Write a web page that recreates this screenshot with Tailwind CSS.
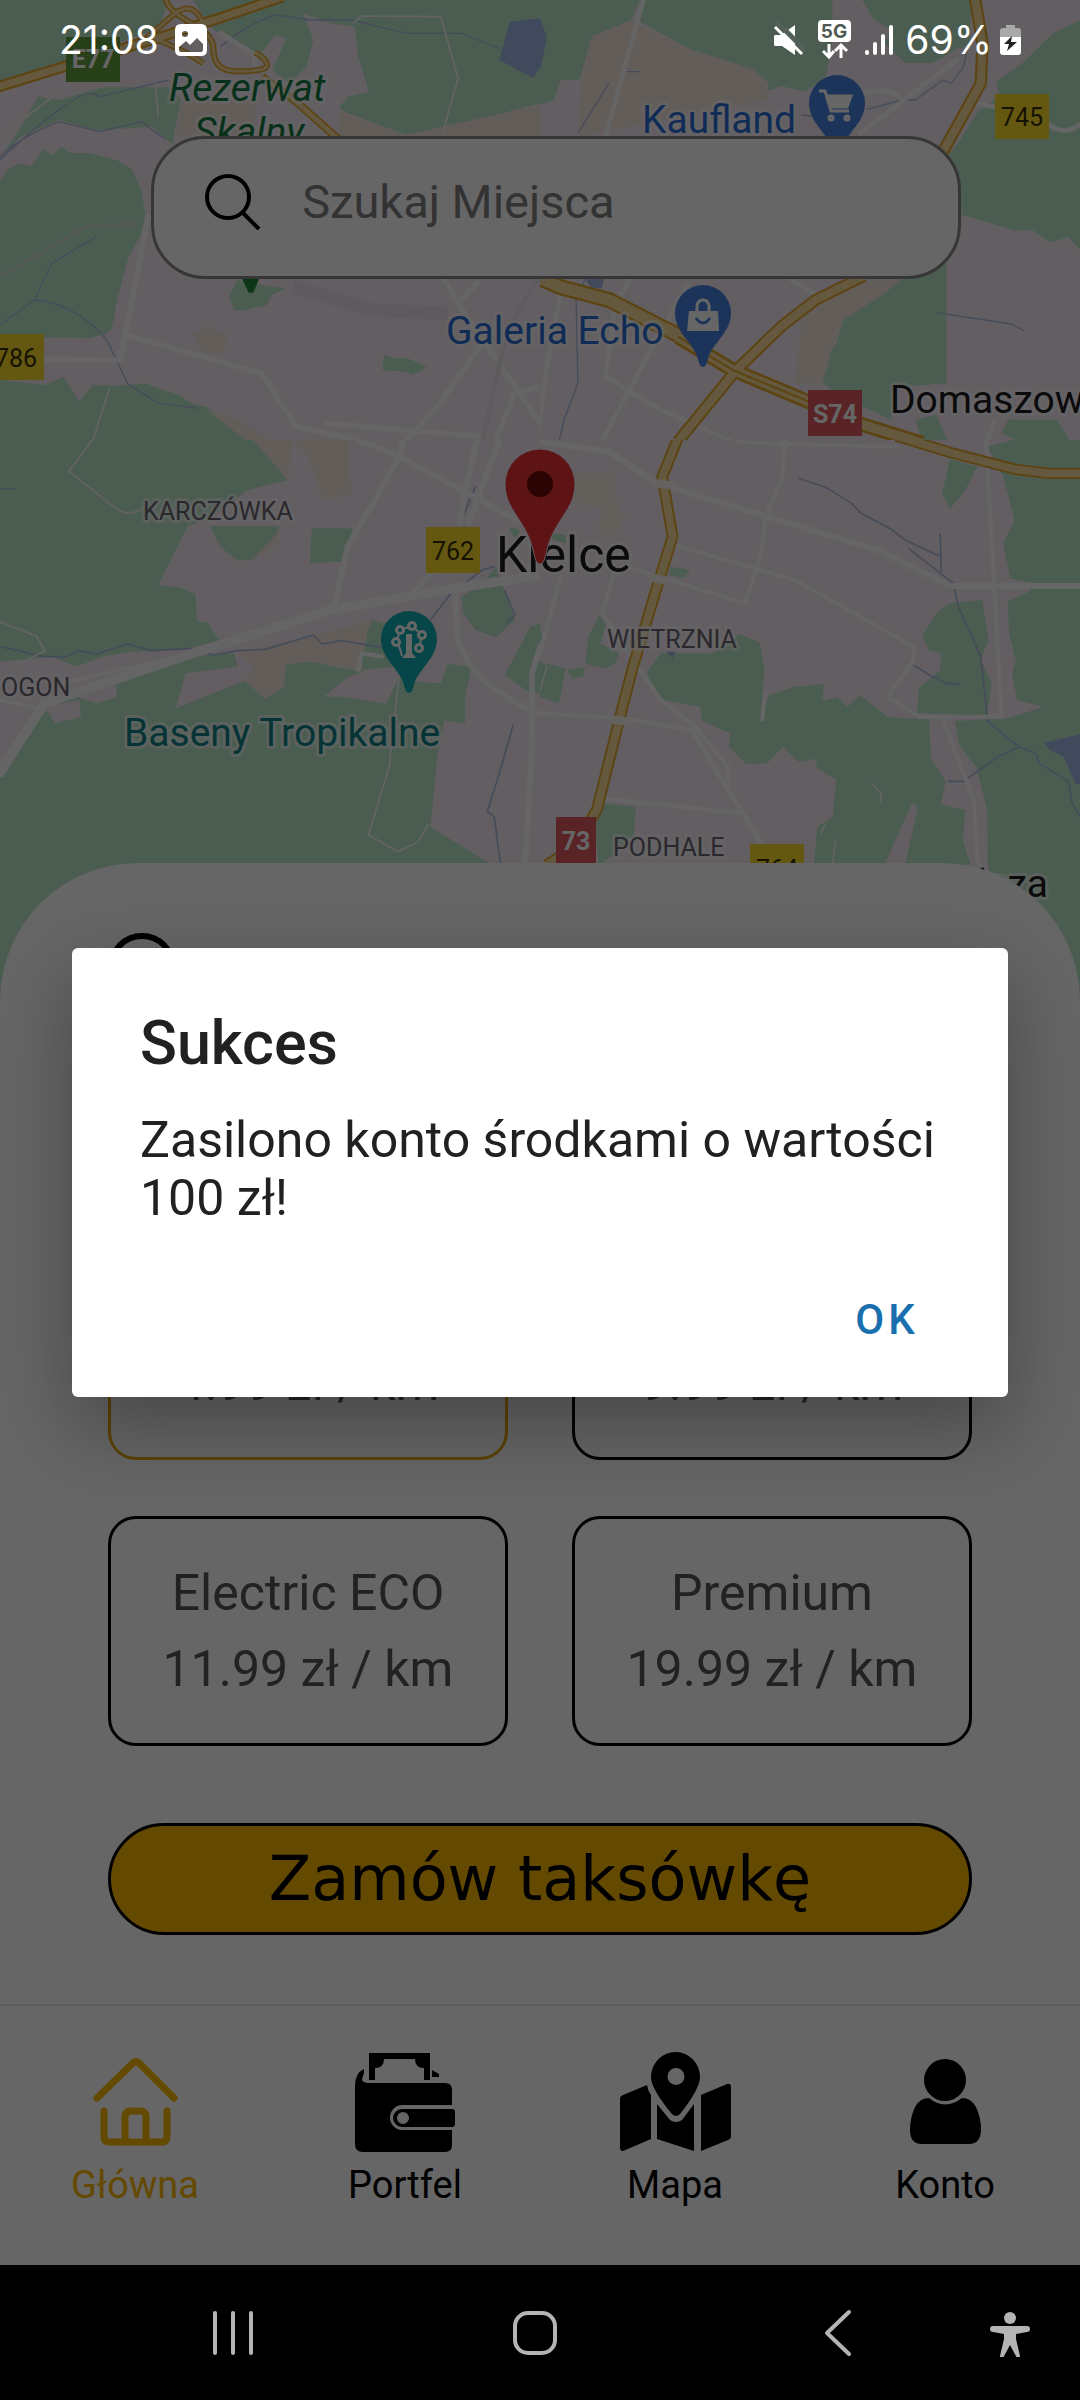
<!DOCTYPE html>
<html lang="pl">
<head>
<meta charset="utf-8">
<meta name="viewport" content="width=device-width, initial-scale=1">
<title>Taksówki Kielce</title>
<script src="https://cdn.jsdelivr.net/npm/@tailwindcss/browser@4"></script>
</head>
<body class="bg-black font-[Roboto,sans-serif]">
<div class="flex min-h-screen flex-col">
  <div class="relative flex flex-1 flex-col overflow-hidden bg-white">

    <!-- Map -->
    <svg class="absolute inset-x-0 top-0 h-[1010px] w-full" viewBox="0 0 1080 1010" preserveAspectRatio="xMidYMin slice" role="img" aria-label="Mapa Kielc">
      <defs>
        <clipPath id="q1"><rect width="1568" height="1320"/></clipPath>
        <clipPath id="q3"><rect width="1568" height="1720"/></clipPath>
        <path id="pin" d="M0 54C-3 54-4 50-5 46C-9 30-28 20-28 0A28 28 0 0 1 28 0C28 20 9 30 5 46C4 50 3 54 0 54Z"/>
      </defs>
      <rect width="1080" height="1010" fill="#f7ebf4"/>

      <!-- north-west -->
      <g transform="scale(.34439 .33333)" clip-path="url(#q1)" fill="none" stroke-linejoin="round">
        <g fill="#bce7ca">
          <path d="M0 0H490L470 60L450 90L170 190L0 250Z"/>
          <path d="M560 0H1568V310L1440 345L1180 405L1000 335L985 320L1010 290L1072 275L1040 170L1030 80L960 70L880 40L910 120L890 200L840 250L790 210L832 115L800 105L750 170L620 90L580 30Z"/>
          <path d="M0 475L50 400L110 290L170 300L300 262L490 262L525 300L500 432L440 380L380 385L280 390L170 360L60 410Z"/>
          <path d="M0 545L20 510L60 490L90 500L125 448L150 465L180 440L200 458L260 460L340 480L385 510L410 570L422 640L410 700L370 780L340 900L325 985L310 1000L260 1015L0 1010Z"/>
          <path d="M0 1140L130 1155L185 1130L230 1203L270 1155L340 1158L420 1150L520 1185L560 1212L600 1220L650 1260L720 1325H0Z"/>
          <path d="M690 840L790 860L830 865L790 885L775 915L700 932L680 930L665 890Z"/>
          <path d="M1115 1065L1150 1075L1180 1073L1240 1100L1200 1125L1180 1115L1110 1110Z"/>
        </g>
        <path fill="#f8e8e0" d="M985 335L1180 405L1440 345L1568 315V410H980Z"/>
        <path fill="#f8e8e0" d="M560 1000L610 980L660 1010L650 1060L590 1060ZM530 300L740 300L740 410H510Z"/>
        <path fill="#f8e8e0" d="M600 1230L700 1260L780 1325H720Z"/>
        <path fill="#a0b8e6" d="M1480 65L1568 55V200L1548 235L1450 180Z"/>
        <path stroke="#eae0ec" stroke-width="40" d="M850 860L1080 930L1300 940"/>
        <g stroke="#adbfdf" stroke-width="4">
          <path d="M0 480Q80 400 170 330T290 290L490 240M0 470Q60 410 170 365L290 395L410 365L480 418M640 140Q720 70 800 45L900 60H1020L1180 100L1340 100L1450 145M0 975L100 900L150 790L280 710M100 900Q220 910 310 1020L370 1150L460 1210L575 1225"/>
        </g>
        <g stroke="#f8f8f6" stroke-width="5">
          <path d="M1025 70L1050 48L1280 50L1330 235L1285 400M270 1320L318 1165M450 250L460 350M0 410L180 270"/>
        </g>
        <g stroke="#fdfdfc" stroke-width="16" stroke-linecap="round">
          <path d="M640 100L740 165V200M430 650L350 1080L130 1078M380 1010L520 1050L760 1120L860 1280L1040 1320M1290 840L1330 910L1568 1270M1330 910L1385 850M1400 1030L1270 1220L1180 1320M950 1270L1400 1310M1490 1180L1568 1160M1490 1190L1440 1320"/>
        </g>
        <path stroke="#ece3ec" stroke-width="14" d="M1560 840L1470 1000L1400 1330"/>
        <path stroke="#cfdccf" stroke-width="10" d="M400 670L250 680L0 830"/>
        <g stroke="#e6a92e" stroke-width="34">
          <path d="M-10 262L400 132Q600 70 820 -10"/>
          <path stroke-width="18" d="M480 -5C500 70 620 70 620 150S700 215 750 210S765 170 740 158M510 40Q560 0 590 70M590 190Q520 140 430 110L520 30"/>
          <path stroke-width="24" d="M760 230L860 305L985 420"/>
        </g>
        <g stroke="#fbdf9c" stroke-width="21">
          <path d="M-10 262L400 132Q600 70 820 -10"/>
          <path stroke-width="9" d="M480 -5C500 70 620 70 620 150S700 215 750 210S765 170 740 158M510 40Q560 0 590 70M590 190Q520 140 430 110L520 30"/>
          <path stroke-width="14" d="M760 230L860 305L985 420"/>
        </g>
        <path fill="#1c8a3a" d="M700 830H755L735 878H722Z"/>
      </g>

      <!-- north-east -->
      <g transform="translate(540 0) scale(.34439 .33333)" clip-path="url(#q1)" fill="none" stroke-linejoin="round">
        <g fill="#bce7ca">
          <path d="M0 0H290L265 60L150 110L115 240L60 240L40 300L0 315Z"/>
          <path d="M290 0H850V120L830 230L770 275L700 258L665 272L660 245L620 208L440 150L290 65Z"/>
          <path d="M935 0H1250V130L1140 190L1060 190L1000 130L1020 90L970 60Z"/>
          <path d="M1568 60L1490 100L1400 190L1325 245L1335 290L1275 330L1220 420L1180 470L1200 640L1260 655L1380 692L1430 690L1480 727L1535 712L1568 750Z"/>
          <path d="M1050 835L1180 790V1150L1040 1160L1020 1260L880 1190L820 1150V1090L860 1030L880 960L1000 880Z"/>
          <path d="M1090 1260L1150 1245L1185 1325H1110ZM1360 1258L1500 1260L1540 1325H1390L1340 1300Z"/>
        </g>
        <path fill="#f7ebf4" d="M850 0H935L970 60L1020 90L1000 130L1060 190L1140 190L1220 140V300H830L850 120Z"/>
        <path fill="#f8e8e0" d="M265 62L440 150L620 208L660 250V300L110 410L120 250L150 110ZM880 850L1050 838L1000 880L880 960L850 1040L820 1150H740L760 960Z"/>
        <g fill="#a0b8e6"><path d="M0 55L20 110L0 215ZM130 838H185L180 865H150Z"/></g>
        <g stroke="#adbfdf" stroke-width="4">
          <path d="M1240 150L1230 200L1195 250L1170 240L1090 300L1050 300L950 328M760 345L790 348M1150 938L1370 972L1405 992M130 840L105 900L110 1150L70 1260L55 1325M250 215H290M200 250L110 400"/>
        </g>
        <g stroke="#fdfdfc" stroke-width="14" stroke-linecap="round">
          <path d="M300 0L190 410M930 400L1210 180M1250 310L1320 320M1470 370Q1520 410 1568 375M940 280Q1020 260 1050 300"/>
          <path d="M430 850L300 1090L180 1325M260 840L220 910L190 1130L350 1230L560 1325M60 880L20 1100L-10 1325M730 840L830 900M1320 1260L1300 1325"/>
        </g>
        <g stroke="#e6a92e" stroke-width="36">
          <path stroke-width="48" d="M-10 830L60 862L200 900L400 1005"/>
          <path d="M940 828L800 900L700 980L570 1110L400 1325"/>
          <path stroke-width="44" d="M400 1010L560 1110L780 1205L940 1275L1110 1330"/>
          <path d="M1263 -5L1285 130L1280 250L1170 455"/>
        </g>
        <g stroke="#fbdf9c" stroke-width="24">
          <path stroke-width="34" d="M-10 830L60 862L200 900L400 1005"/>
          <path d="M940 828L800 900L700 980L570 1110L400 1325"/>
          <path stroke-width="28" d="M400 1010L560 1110L780 1205L940 1275L1110 1330"/>
          <path d="M1263 -5L1285 130L1280 250L1170 455"/>
        </g>
        <path stroke="#e6a92e" stroke-width="6" d="M400 1010L560 1110L780 1205"/>
      </g>

      <!-- south-west -->
      <g transform="translate(0 440) scale(.34439 .33333)" clip-path="url(#q3)" fill="none" stroke-linejoin="round">
        <g fill="#bce7ca">
          <path d="M0 -2H735L836 120L720 150L600 240L545 258L460 435L520 442L568 462L572 545L600 545L640 605L520 630L380 635L300 650L220 680L150 650L0 665Z"/>
          <path d="M0 1000L90 880L135 800L210 765L280 790L340 770L335 730L520 650L680 640L690 680L540 700L510 805L710 722L770 775L830 672L900 665L1055 695L1010 712L940 770L1000 770L1120 792L1160 710L1220 727L1280 730L1300 672L1370 680L1350 770L1350 850L1290 842L1270 950L1250 1160L1420 1270V1720H0Z"/>
          <path d="M610 258H810L800 300L740 358L690 362L640 320Z"/>
          <path d="M905 265H1025L995 365L900 368Z"/>
          <path d="M1340 470L1400 430L1440 380L1460 440L1495 540L1440 592L1380 570L1345 520Z"/>
          <path d="M1570 550L1540 560L1465 705L1540 760H1570Z"/>
          <path d="M1080 540L1120 550L1150 680L1050 690L1060 590ZM1475 260L1510 270L1500 300Z"/>
        </g>
        <path fill="#f7ebf4" d="M130 800L230 780L235 830L160 850Z"/>
        <path fill="#f8e8e0" d="M850 0H1010L1020 160L940 180L900 60ZM735 0H850L836 120ZM690 640L900 590L1075 540L1045 690L900 665L830 672L825 740L770 775L710 722L740 690ZM730 360L810 275L812 310Z"/>
        <g stroke="#adbfdf" stroke-width="5">
          <path d="M0 620L130 650H190L230 632L280 642L370 612L440 632L560 625L620 645L690 632L770 628L910 585L935 612L990 602L1110 622M1250 540L1310 460L1400 390L1435 380M1490 855L1450 1000L1415 1115L1435 1130L1453 1270M1465 450L1495 525L1470 550M0 147H45M1340 240L1380 140"/>
        </g>
        <g stroke="#f8f8f6" stroke-width="5">
          <path d="M268 0L200 95L330 200Q370 235 415 205M0 545L105 588L130 632L25 690M1160 700L1130 980L1070 1185L1155 1235L1215 1205L1245 1150M380 640L400 680"/>
        </g>
        <g stroke="#fdfdfc" stroke-linecap="round" stroke-width="17">
          <path stroke-width="28" d="M0 1000L60 900L130 790L560 640L960 510L1320 445L1568 405"/>
          <path d="M1170 0L1160 50L1010 320L970 500M1040 0L1160 50L1350 155L1510 245M1385 0L1350 155L1335 250M1450 0L1360 250M1250 400L1200 460M1320 450L1330 600Q1370 740 1568 820M1568 620L1545 700V900L1525 1270"/>
          <path stroke-width="12" d="M0 780L130 810M180 730L560 640M1040 690L1050 640L1110 650"/>
        </g>
      </g>

      <!-- south-east -->
      <g transform="translate(540 440) scale(.34439 .33333)" clip-path="url(#q3)" fill="none" stroke-linejoin="round">
        <g fill="#bce7ca">
          <path d="M140 590L172 525L192 555L175 610L228 640L220 670L190 685L132 672Z"/>
          <path d="M380 380L438 390L415 415L372 405ZM0 665L75 685L55 790L0 770ZM80 690L130 680L125 710L95 716ZM30 280L75 285V310L40 300ZM0 560L8 600H0Z"/>
          <path d="M310 700L350 640L500 640L580 582L638 608L652 690L640 830L665 765L740 740L825 732L820 782L862 772L893 800L930 765L1010 832L1130 838L1135 955L1178 1022L1165 1093L1235 1110L1228 1200L1250 1275H1060L1097 1100L1080 1090L1000 1275H795L805 1160L850 1130L860 1020L805 985L800 957L750 965L705 920L660 970L600 972L548 920L552 880L470 842L465 800L350 780Z"/>
          <path d="M1570 -2H1380L1300 20L1345 110L1378 240L1345 310L1365 415L1430 430L1420 455L1358 485L1362 580L1382 665L1370 700L1385 780L1460 800L1360 835L1205 843L1215 910L1268 985L1298 1110L1300 1270L1400 1720H1570Z"/>
          <path d="M1190 58L1270 80L1235 150L1190 208L1168 160Z"/>
          <path d="M1285 480L1190 490L1150 520L1110 590L1130 632L1165 640L1162 690L1100 745L1095 820L1298 828L1312 730L1280 660L1302 600Z"/>
          <path d="M180 1090L278 1100L272 1190L170 1280L160 1150Z"/>
        </g>
        <path fill="#f8eee0" d="M100 100L220 95L215 180L250 230L210 300L170 270L180 200L100 190Z"/>
        <path fill="#a0b8e6" d="M1570 882L1465 908L1480 930L1520 950L1555 1030L1570 1035ZM365 635H395L385 655Z"/>
        <g stroke="#adbfdf" stroke-width="5">
          <path d="M750 115L830 142L905 190L930 218L1020 268L1060 300L1165 350M1070 325L1200 430L1215 500L1280 650L1300 845L1390 920L1440 940L1450 970L1535 1025L1545 1090L1570 1130M1162 280L1165 395M1085 675L1130 705L1180 730L1220 733M1185 1024H1230L1330 950L1390 922"/>
        </g>
        <g stroke="#fdfdfc" stroke-linecap="round" stroke-width="18">
          <path d="M0 5L200 35L340 130L660 230L980 330L1190 438H1570" stroke-width="18"/>
          <path stroke-width="12" d="M710 0L705 110L655 230L640 350L595 490L360 415L270 385M400 318L740 420L1085 620V660L1010 770L1100 830H1340L1295 0M570 5L710 12L1040 20M215 400L180 520L290 690M60 410L0 640"/>
          <path d="M0 820L240 835L440 870L545 1050V980L450 860L350 780L290 690M440 870L640 1205M180 1075L590 1120" stroke-width="13"/>
          <path stroke-width="11" d="M645 840L655 760M1170 840L1260 1080L1270 1260L1320 1400"/>
          <path stroke-width="4" d="M965 1030L990 1060V1090M858 1200L850 1270M830 1150L815 1180M20 680L0 750"/>
        </g>
        <g stroke="#e6a92e" stroke-width="34">
          <path d="M400 -5L355 110L385 290L340 440L270 680L230 840L165 1110L100 1220L20 1275"/>
          <path d="M1035 -12L1200 40L1380 88L1475 100H1575"/>
        </g>
        <g stroke="#fbdf9c" stroke-width="23">
          <path d="M400 -5L355 110L385 290L340 440L270 680L230 840L165 1110L100 1220L20 1275"/>
          <path d="M1035 -12L1200 40L1380 88L1475 100H1575"/>
        </g>
        <path stroke="#fdf8ee" stroke-width="24" d="M325 127L390 138M320 411L370 423M207 838L260 845"/>
      </g>

      <!-- road shields -->
      <g font-size="25" text-anchor="middle">
        <rect x="66" y="37" width="54" height="45" fill="#62a040"/><text x="93" y="68" fill="#fff" font-weight="700">E77</text>
        <g fill="#fadb28"><rect x="-10" y="334" width="54" height="46"/><rect x="995" y="94" width="54" height="45"/><rect x="426" y="527" width="54" height="46"/><rect x="750" y="844" width="54" height="46"/></g>
        <g fill="#3a3008"><text x="16" y="367">786</text><text x="1022" y="126">745</text><text x="453" y="560">762</text><text x="777" y="878">764</text></g>
        <g fill="#e0585c"><rect x="808" y="390" width="54" height="46"/><rect x="556" y="817" width="40" height="47"/></g>
        <g fill="#fff" font-weight="700"><text x="835" y="423">S74</text><text x="576" y="850">73</text></g>
      </g>

      <!-- places -->
      <g font-size="39" stroke="#fff" stroke-opacity=".6" stroke-width="6" stroke-linejoin="round" paint-order="stroke">
        <g fill="#137a45" font-style="italic"><text x="169" y="101">Rezerwat</text><text x="194" y="145">Skalny</text></g>
        <g fill="#2a6fd6"><text x="642" y="133">Kaufland</text><text x="446" y="344">Galeria Echo</text></g>
        <text x="124" y="746" fill="#0f8388">Baseny Tropikalne</text>
        <g fill="#1d1a20"><text x="890" y="413">Domaszow</text><text x="1048" y="897" text-anchor="end">Bilcza</text><text x="496" y="572" font-size="50">Kielce</text></g>
        <g font-size="25" fill="#6a6470"><text x="143" y="520">KARCZÓWKA</text><text x="607" y="648">WIETRZNIA</text><text x="613" y="856">PODHALE</text><text x="1" y="696">OGON</text></g>
      </g>

      <!-- place pins -->
      <use href="#pin" x="837" y="103" fill="#4a83e0"/>
      <g transform="translate(837 103)" fill="none" stroke="#fff" stroke-width="3"><path d="M-18-12H-12L-6 8H12"/><path fill="#fff" d="M-10-7H14L10 4H-6Z"/><circle cx="-6" cy="15" r="2"/><circle cx="10" cy="15" r="2"/></g>
      <use href="#pin" x="703" y="313" fill="#4a83e0"/>
      <g transform="translate(703 313)" fill="none" stroke="#fff" stroke-width="3"><path fill="#fff" stroke="none" d="M-14-2H15L16 18H-16Z"/><path d="M-6-2V-7Q-5-13 0-13T6-7V-2"/><path stroke="#4a83e0" d="M-7 5Q0 15 7 5"/></g>
      <use href="#pin" x="409" y="639" fill="#13b0b4"/>
      <g transform="translate(409 639)" fill="none" stroke="#fff" stroke-width="3"><path fill="#fff" stroke="none" d="M-3-5H3V14L7 19H-7L-3 14Z"/><path stroke-width="2" d="M-7 17Q-9 9-12 2L-9-9L3-13L13-4L10 9"/><g fill="#13b0b4"><circle cx="-13" cy="3" r="3.500"/><circle cx="-9" cy="-9" r="3.500"/><circle cx="3" cy="-13" r="3.500"/><circle cx="13" cy="-4" r="3.500"/><circle cx="10" cy="9" r="3.500"/></g></g>
      <path fill="#ea3335" stroke="#f7ebf4" stroke-width="1" d="M540 564C536 564 535 558 533 550C526 520 505 510 505 484A35 35 0 0 1 575 484C575 510 554 520 547 550C545 558 544 564 540 564Z"/>
      <circle cx="540" cy="484" r="13" fill="#6e0a0a"/>
    </svg>

    <!-- Place search -->
    <label class="relative mt-[136px] mr-[11%] ml-[14%] flex h-[143px] items-center gap-10 rounded-[54px] border-3 border-[#888] bg-white pr-8 pb-3 pl-12">
      <svg class="h-[60px] w-[60px] shrink-0" viewBox="0 0 60 60" fill="none" stroke="#000" stroke-width="4"><circle cx="26" cy="25" r="21"/><path d="M40 40L57 57"/></svg>
      <span class="sr-only">Szukaj miejsca</span>
      <input type="text" placeholder="Szukaj Miejsca" class="min-w-0 flex-1 bg-transparent text-[47px] leading-[60px] outline-none placeholder:text-[#808080]">
    </label>

    <!-- Ordering sheet -->
    <main class="relative mt-[584px] flex flex-1 flex-col rounded-t-[138px] bg-white px-[10%] pt-[70px]">
      <label class="flex h-[76px] items-center gap-8">
        <svg class="h-[76px] w-[76px] shrink-0" viewBox="0 0 76 76" fill="none" stroke="#000" stroke-width="6"><circle cx="34" cy="34" r="31"/><path d="M56 56L74 74"/></svg>
        <span class="sr-only">Dokąd jedziemy?</span>
        <input type="text" class="min-w-0 flex-1 text-[47px] outline-none">
      </label>
      <div class="mt-[221px] grid grid-cols-2 gap-x-16 gap-y-14">
        <button type="button" aria-pressed="true" class="h-[230px] rounded-[28px] border-3 border-[#e6a80c] text-[50px] leading-[76px] text-[#555]">Standard<br>4.99 zł / km</button>
        <button type="button" aria-pressed="false" class="h-[230px] rounded-[28px] border-3 border-black text-[50px] leading-[76px] text-[#555]">Komfort<br>9.99 zł / km</button>
        <button type="button" aria-pressed="false" class="h-[230px] rounded-[28px] border-3 border-black text-[50px] leading-[76px] text-[#555]">Electric ECO<br>11.99 zł / km</button>
        <button type="button" aria-pressed="false" class="h-[230px] rounded-[28px] border-3 border-black text-[50px] leading-[76px] text-[#555]">Premium<br>19.99 zł / km</button>
      </div>
      <button type="button" class="mt-[77px] mb-[69px] h-28 rounded-full border-3 border-black bg-[#fab600] font-['DejaVu_Sans',sans-serif] text-[62px] leading-[100px]">Zamów taksówkę</button>
    </main>

    <!-- Tabs -->
    <nav class="relative grid grid-cols-4 border-t-2 border-[#e6e6e6] bg-white pt-[43px] pb-[58px] text-[38px] leading-11">
      <a href="#" aria-current="page" class="flex flex-col items-center gap-1 text-[#fab600]">
        <svg class="h-[110px] w-28" viewBox="-1 0 112 110" fill="none" stroke="currentColor" stroke-width="7" stroke-linecap="round" stroke-linejoin="round"><path d="M17 49L53 14Q56 11 59 14L94 49M24 62V88Q24 93 29 93H82Q87 93 87 88V62M45 92V68Q45 62 51 62H60Q66 62 66 68V92"/></svg>
        Główna
      </a>
      <a href="#" class="flex flex-col items-center gap-1">
        <svg class="h-[110px] w-28" viewBox="-1 0 112 110"><path d="M14 20V24L12 30Q12 34 19 34H95Q102 34 102 41V56H52A12 12.500 0 0 0 52 81H102V96Q102 103 95 103H13Q5 103 5 95V37Q5 24 14 20Z"/><path d="M19 4H80V31H74V19Q65 19 65 10H34Q34 19 25 19V31H19Z"/><path d="M82 21L89 25V28H82Z"/><path fill-rule="evenodd" d="M52 60H102Q105 60 105 63V75Q105 78 102 78H52A9 9 0 0 1 52 60ZM53 63A6 6 0 0 0 53 75A6 6 0 0 0 53 63Z"/></svg>
        Portfel
      </a>
      <a href="#" class="flex flex-col items-center gap-1">
        <svg class="h-[110px] w-28" viewBox="0 0 112 110"><path fill-rule="evenodd" d="M57 3A24.500 25 0 0 1 81 28C81 39 67 58 61 65Q57 69 53 65C47 58 32 39 32 28A24.500 25 0 0 1 57 3ZM57 19A8.500 8.500 0 0 0 57 36A8.500 8.500 0 0 0 57 19Z"/><path d="M1 50Q1 47 4 46L28 36Q29 42 32 46V90L4 102Q1 102 1 99ZM38 55L51 71Q57 75 63 71L75 55V102L38 90ZM82 46L108 35Q112 34 112 38V88Q112 90 109 91L82 102Z"/></svg>
        Mapa
      </a>
      <a href="#" class="flex flex-col items-center gap-1">
        <svg class="h-[110px] w-28" viewBox="0 0 112 110"><circle cx="56" cy="31" r="21"/><path d="M40 49Q56 62 73 49Q82 49 87 58Q92 69 92 80Q92 95 80 95H33Q21 95 21 81Q21 69 26 58Q31 49 40 49Z"/></svg>
        Konto
      </a>
    </nav>

    <!-- Dialog -->
    <div class="absolute inset-0 flex items-center justify-center bg-black/60 px-[72px] pt-20">
      <div role="alertdialog" aria-modal="true" aria-labelledby="dlg-title" aria-describedby="dlg-text" class="flex w-full flex-col rounded-md bg-white pt-15 pb-[52px] pl-[68px] text-[#212121] shadow-[0_30px_80px_rgba(0,0,0,0.3)]">
        <h1 id="dlg-title" class="text-[61px] leading-[70px] font-medium">Sukces</h1>
        <p id="dlg-text" class="mt-[33px] pr-[60px] text-[50px] leading-[58px]">Zasilono konto środkami o wartości 100 zł!</p>
        <button type="button" class="mt-[68px] mr-[89px] self-end text-[42px] leading-[50px] font-medium tracking-widest text-[#1a6fae]">OK</button>
      </div>
    </div>

    <!-- Status bar -->
    <div class="absolute inset-x-0 top-0 flex h-20 items-center justify-between px-[59px] font-[Inter,sans-serif] text-[39px] leading-[46px] text-white">
      <div class="flex items-center gap-4">
        <span>21:08</span>
        <svg class="h-8 w-8" viewBox="0 0 32 32" fill="#fff"><path fill-rule="evenodd" d="M6 0H26Q32 0 32 6V26Q32 32 26 32H6Q0 32 0 26V6Q0 0 6 0ZM10 7A3 3 0 0 0 10 13A3 3 0 0 0 10 7ZM4 26Q4 28 6 28H26Q28 28 28 26V20L22 14L15 21L11 17L4 23Z"/></svg>
      </div>
      <div class="flex items-center gap-2">
        <svg class="h-10 w-8" viewBox="0 0 32 40"><path fill="#fff" d="M2 15H8L22 5V35L9 26H2Q1 26 1 24V17Q1 15 2 15Z"/><path stroke="#54605a" stroke-width="5" d="M4 2L33 31"/><path stroke="#fff" stroke-width="3" d="M2 7L29 34"/></svg>
        <svg class="ml-1 h-10 w-9" viewBox="0 0 36 40"><rect x="1" y="0" width="33" height="22" rx="4" fill="#fff"/><text x="17" y="18" text-anchor="middle" font-size="19" font-weight="700" fill="#505a54">5G</text><path fill="none" stroke="#fff" stroke-width="3" d="M12 24V36M6 31L12 37L17 31M24 38V25M18 31L24 25L30 31"/></svg>
        <svg class="mr-1 ml-1 h-10 w-7" viewBox="0 0 28 40" stroke="#fff" stroke-width="4" stroke-linecap="round"><path d="M2 32V33M10 24V33M18 16V33M26 7V33"/></svg>
        <span>69%</span>
        <svg class="h-8 w-[21px]" viewBox="0 0 21 32"><path fill="#a9a9a9" d="M6 1H15V4H18Q21 4 21 7V13H0V7Q0 4 3 4H6Z"/><path fill="#fff" d="M0 13H21V28Q21 31 18 31H3Q0 31 0 28Z"/><path fill="#222" d="M12 12L4 20H9L7 27L17 18H11Z"/></svg>
      </div>
    </div>
  </div>

  <!-- System navigation -->
  <footer class="relative flex h-[135px] items-center bg-black text-[#b4b4b4]">
    <div class="mr-1.5 grid flex-1 grid-cols-[466fr_137fr_471fr] items-center">
      <button type="button" aria-label="Ostatnie" class="justify-self-center"><svg class="h-12 w-12" viewBox="0 0 48 48" stroke="currentColor" stroke-width="4" stroke-linecap="round"><path d="M6 4V44M24 4V44M42 4V44"/></svg></button>
      <button type="button" aria-label="Ekran główny" class="justify-self-center"><svg class="h-12 w-12" viewBox="0 0 48 48" fill="none" stroke="currentColor" stroke-width="4"><rect x="4" y="4" width="40" height="40" rx="13"/></svg></button>
      <button type="button" aria-label="Wstecz" class="justify-self-center"><svg class="h-12 w-12" viewBox="0 0 48 48" fill="none" stroke="currentColor" stroke-width="4" stroke-linecap="round" stroke-linejoin="round"><path d="M34 3L12 24L34 45"/></svg></button>
    </div>
    <button type="button" aria-label="Dostępność" class="absolute right-[46px]"><svg class="h-12 w-12" viewBox="0 0 48 48" fill="currentColor"><circle cx="24" cy="9" r="6"/><path d="M7 17H41Q44 17 44 20T41 23L30 25V30L34 47Q34 50 31 49L24 36L17 49Q14 50 14 47L18 30V25L7 23Q4 23 4 20T7 17Z"/></svg></button>
  </footer>
</div>
</body>
</html>
